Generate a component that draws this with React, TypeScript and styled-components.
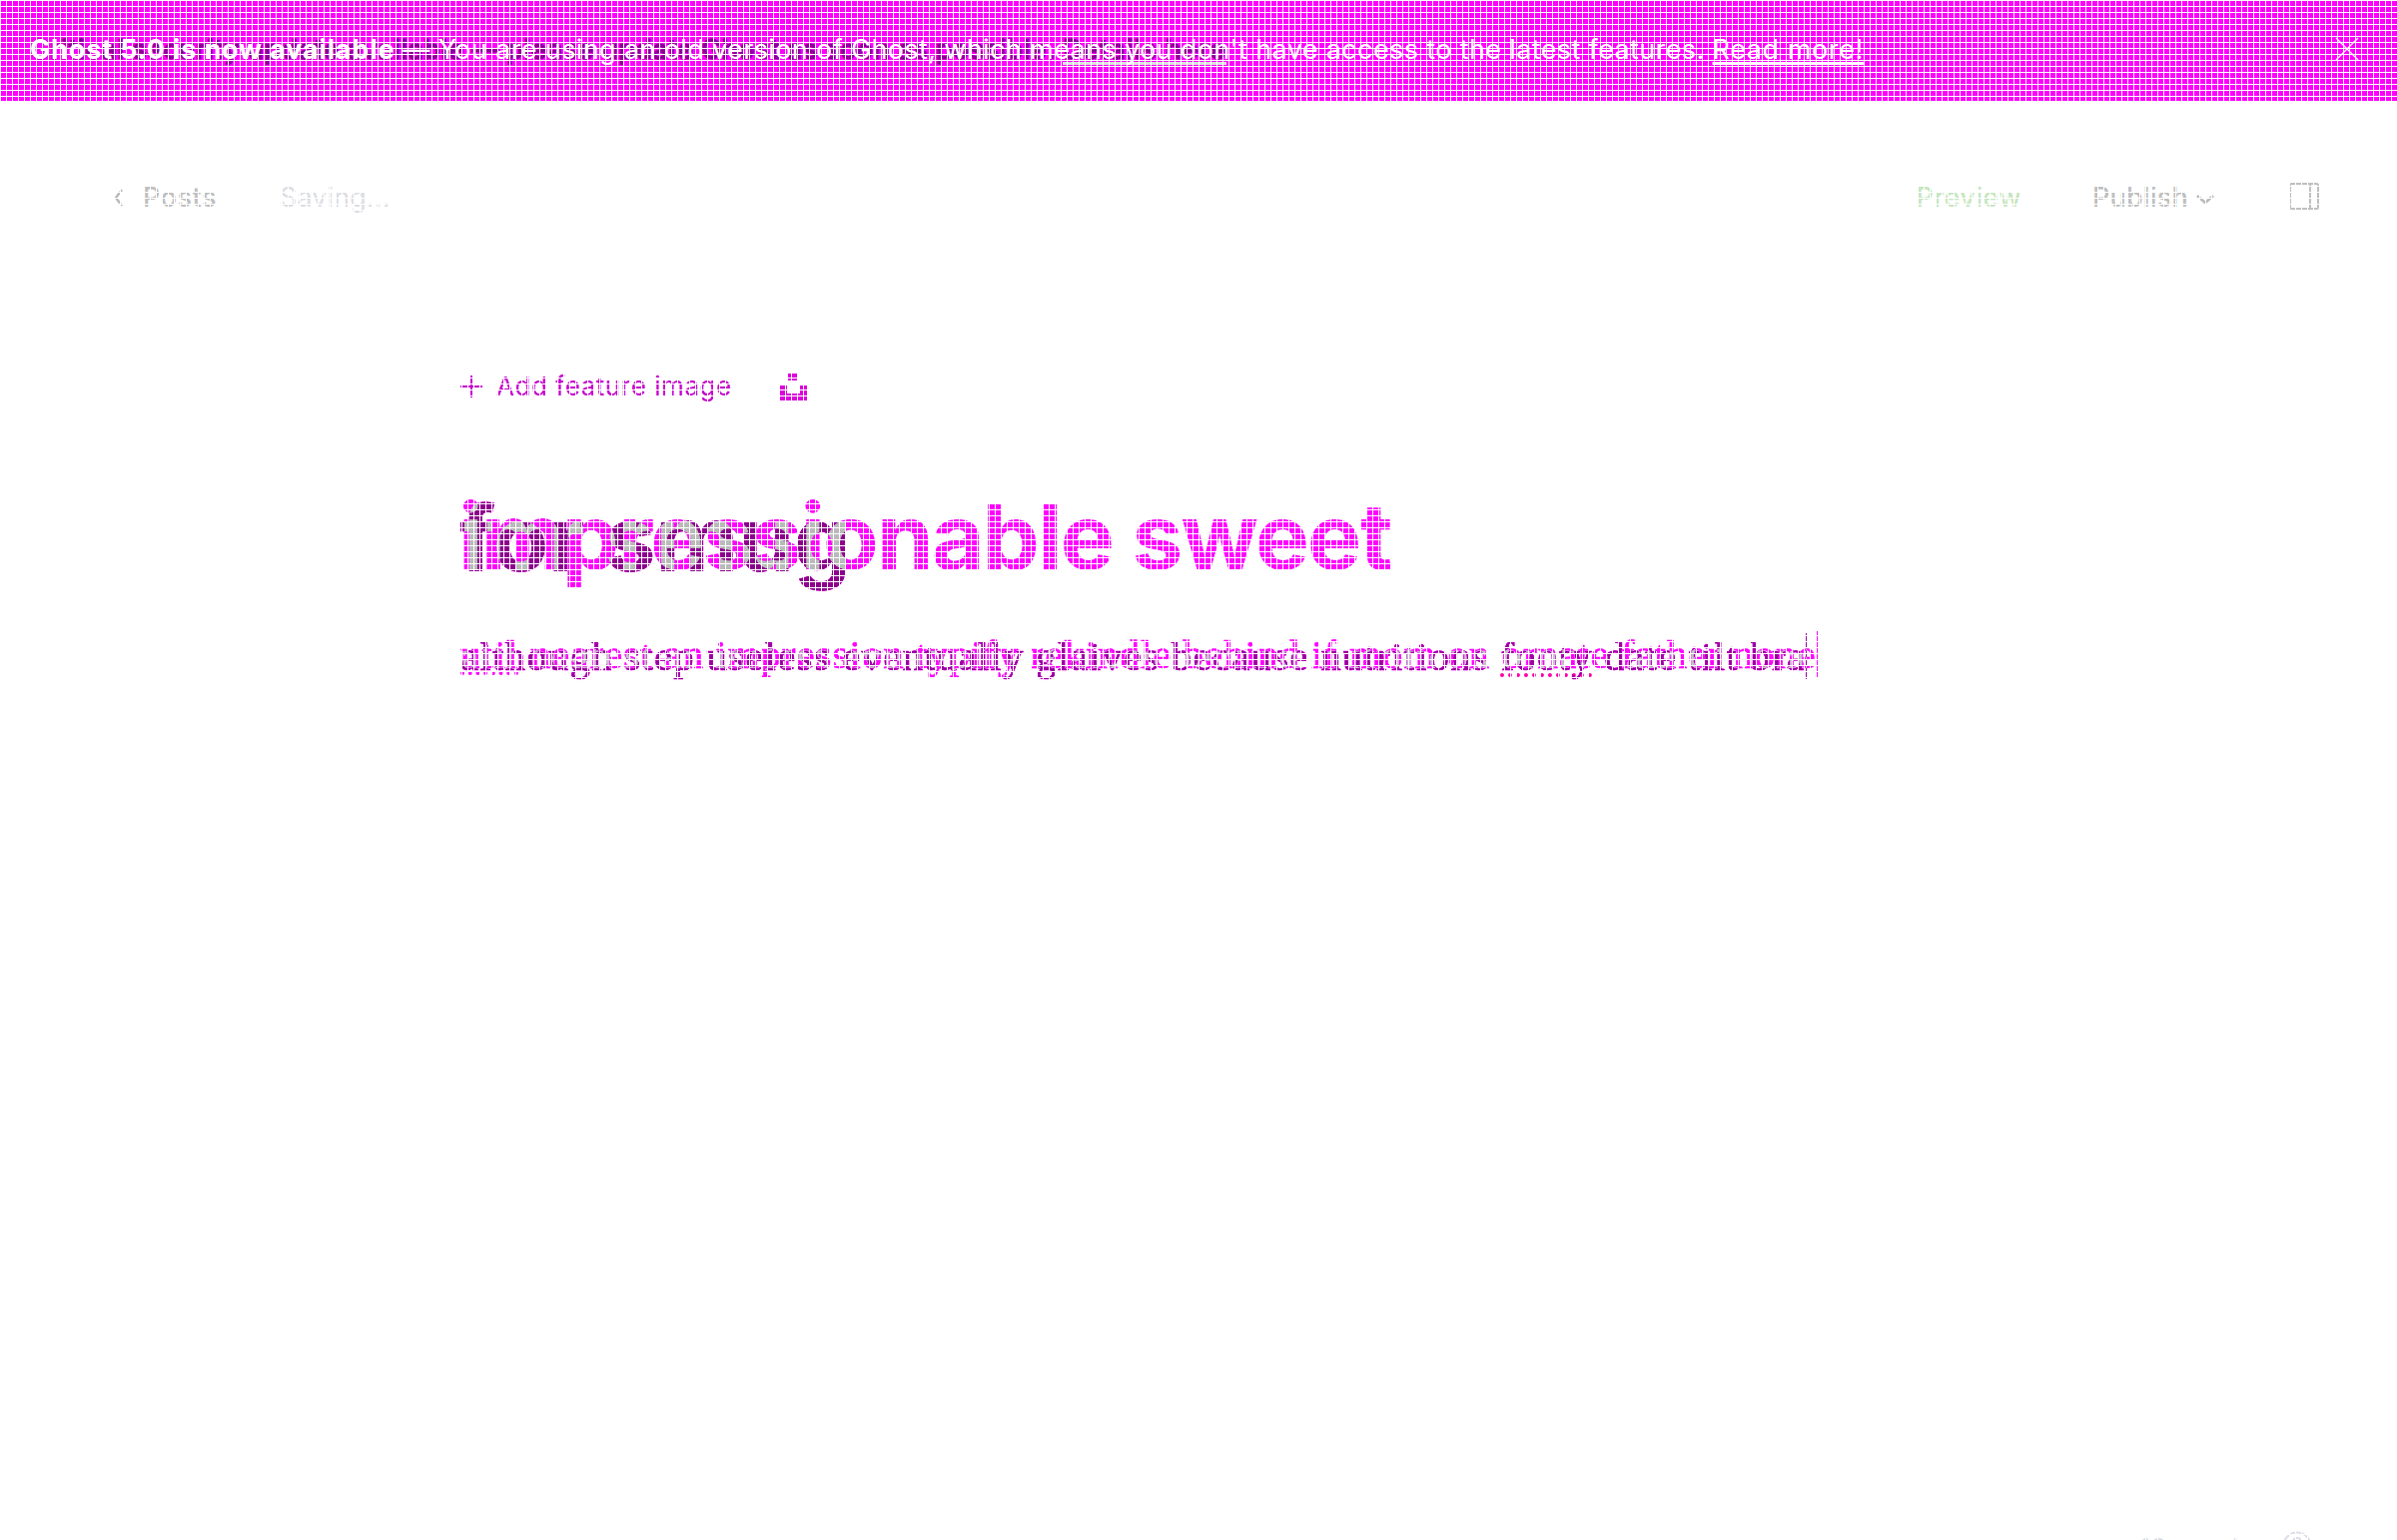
import React from "react";
import styled, { createGlobalStyle } from "styled-components";

const Global = createGlobalStyle`
  * { box-sizing: border-box; }
  body { margin: 0; background: #fff; overflow: hidden; font-family: Inter, "Liberation Sans", sans-serif; }
`;
const Page = styled.div`
  position: relative; width: 2400px; height: 1542px; overflow: hidden;
  display: flex; flex-direction: column; background: #fff;
`;
const GridLines = styled.div`
  position: absolute; inset: 0; pointer-events: none; z-index: 5;
  background-image:
    linear-gradient(to right, #fff 1px, transparent 1px),
    linear-gradient(to bottom, #fff 1px, transparent 1px);
  background-size: 6px 6px;
`;
const Banner = styled.header`
  height: 101px; flex: none; background: #f0f; display: flex; align-items: center;
  justify-content: space-between; padding: 0 37px 2px 30px;
`;
const Stack = styled.div`display: grid; justify-items: start;`;
const BannerText = styled.p<{ $color: string; $spacing: number; $weight: number; $stroke?: number }>`
  grid-area: 1 / 1; margin: 0; white-space: nowrap; font-size: 27px; line-height: 40px;
  font-weight: ${(p) => p.$weight}; color: ${(p) => p.$color}; letter-spacing: ${(p) => p.$spacing}px;
  -webkit-text-stroke: ${(p) => p.$stroke ?? 0}px currentColor;
`;
const Strong = styled.b`font-weight: 700; letter-spacing: 0.85px;`;
const BannerLink = styled.a<{ $line: string; $spacing?: number }>`
  text-decoration: underline; text-decoration-color: ${(p) => p.$line};
  text-decoration-thickness: 3px; text-underline-offset: 3px; text-decoration-skip-ink: none;
  letter-spacing: ${(p) => p.$spacing ?? 0.6}px;
`;
const Bar = styled.nav`
  height: 193px; flex: none; display: flex; align-items: center; justify-content: space-between;
  padding: 0 78px 0 114px;
`;
const Side = styled.div`display: flex; align-items: center;`;
const Label = styled.span<{ $color: string; $left?: number; $spacing?: number; $size?: number; $weight?: number }>`
  font-size: ${(p) => p.$size ?? 27}px; line-height: 36px; font-weight: ${(p) => p.$weight ?? 500};
  white-space: nowrap; color: ${(p) => p.$color}; margin-left: ${(p) => p.$left ?? 0}px;
  letter-spacing: ${(p) => p.$spacing ?? 0.4}px;
`;
const Icon = styled.svg<{ $left?: number; $top?: number }>`
  display: block; flex: none; margin-left: ${(p) => p.$left ?? 0}px; margin-top: ${(p) => p.$top ?? 0}px;
`;
const Editor = styled.main`flex: 1; padding: 70px 0 0 461px;`;
const FeatureRow = styled.div`display: flex; align-items: center; height: 46px; margin-bottom: 72px;`;
const Blended = styled.div<{ $shift?: number }>`
  width: 1500px; isolation: isolate; background: #fff; filter: url(#overlap);
  display: grid; justify-items: start; align-items: start;
  margin: 0 0 31px ${(p) => p.$shift ?? 0}px;
`;
const Title = styled.h1<{ $front?: boolean; $spacing: number }>`
  grid-area: 1 / 1; margin: ${(p) => (p.$front ? "0" : "2px 0 0 1px")}; white-space: nowrap;
  font-size: 91px; line-height: 110px; font-weight: 700;
  letter-spacing: ${(p) => p.$spacing}px;
  color: ${(p) => (p.$front ? "#0f0" : "#8c008c")};
  mix-blend-mode: ${(p) => (p.$front ? "difference" : "normal")};
`;
const Body = styled.p<{ $front?: boolean; $spacing: number }>`
  grid-area: 1 / 1; margin: ${(p) => (p.$front ? 0 : 2)}px 0 0; white-space: nowrap;
  display: flex; align-items: center; height: 60px;
  font-family: "Liberation Serif", serif; font-size: 41px; line-height: 60px;
  letter-spacing: ${(p) => p.$spacing}px;
  -webkit-text-stroke: 0.6px currentColor;
  color: ${(p) => (p.$front ? "#0f0" : "#9a009f")};
  mix-blend-mode: ${(p) => (p.$front ? "difference" : "normal")};
`;
const Misspelt = styled.span<{ $dots: string }>`
  text-decoration: underline dotted ${(p) => p.$dots}; text-decoration-thickness: 4px;
  text-underline-offset: 3px; text-decoration-skip-ink: none;
`;
const Caret = styled.span`width: 1px; height: 46px; background: currentColor;`;
const Footer = styled.footer`
  height: 9px; flex: none; display: flex; align-items: flex-start; padding-left: 2142px;
`;

export default function App() {
  return (
    <Page>
      <Global />
      <svg width="0" height="0" style={{ position: "absolute" }}>
        <filter id="overlap" colorInterpolationFilters="sRGB" x="0" y="0" width="100%" height="100%">
          <feColorMatrix values="1 .18 0 0 0  .6 1 0 0 -.6  0 .18 1 0 0  0 0 0 1 0" />
        </filter>
      </svg>
      <Banner>
        <Stack>
          <BannerText $color="#8c0096" $spacing={0.38} $weight={500} $stroke={1}>
            Critical security update available — please update Ghost as soon as possible. <BannerLink $line="#dbe1de" $spacing={0.9}>Details here</BannerLink>
          </BannerText>
          <BannerText $color="#fff" $spacing={0.37} $weight={400}>
            <Strong>Ghost 5.0 is now available</Strong> — You are using an old version of Ghost, which means you don't have access to the latest features. <BannerLink $line="#fff">Read more!</BannerLink>
          </BannerText>
        </Stack>
        <Icon width="26" height="26" viewBox="0 0 26 26" fill="none" stroke="#fff" strokeWidth="1.3" $top={-2}>
          <path d="M2 2 24 24M24 2 2 24" />
        </Icon>
      </Banner>
      <Bar>
        <Side>
          <Icon width="10" height="18" viewBox="0 0 10 18" fill="none" stroke="#b8b8b8" strokeWidth="2.4">
            <path d="M8 1 2 9 8 17" />
          </Icon>
          <Label $color="#bfbfbf" $left={19} $spacing={0.5}>Posts</Label>
          <Label $color="#dcdde3" $left={63} $spacing={0.1} $weight={400}>Saving...</Label>
        </Side>
        <Side>
          <Label $color="#c6e6be" $spacing={0.4}>Preview</Label>
          <Label $color="#bfbfbf" $left={71} $spacing={0.2}>Publish</Label>
          <Icon $left={8} $top={5} width="18" height="10" viewBox="0 0 18 10" fill="none" stroke="#bbb" strokeWidth="2.8">
            <path d="M1 1 9 8 17 1" />
          </Icon>
          <Icon $left={75} $top={-2} width="30" height="27" viewBox="0 0 30 27" fill="none" stroke="#bfbfbf" strokeWidth="2">
            <rect x="1" y="1" width="28" height="25" rx="1.5" /><path d="M21 1v25" />
          </Icon>
        </Side>
      </Bar>
      <Editor>
        <FeatureRow>
          <Icon width="22" height="22" viewBox="0 0 22 22" stroke="#c500cd" strokeWidth="2">
            <path d="M11 0v22M0 11h22" />
          </Icon>
          <Label $color="#c500cd" $left={14} $size={26} $spacing={0.55} $weight={400}>Add feature image</Label>
          <Icon $left={48} width="27" height="27" viewBox="0 0 27 27" fill="#dd00dd">
            <path d="M8 0h10v7H8zM0 12h7v8h13v-8h7v15H0z" />
          </Icon>
        </FeatureRow>
        <Blended $shift={-2}>
          <Title $spacing={-0.7}>for smug</Title>
          <Title $front $spacing={-1.95}>impressionable sweet</Title>
        </Blended>
        <Blended>
          <Body $spacing={1.17}>
            <span>although step useless eventually glaives because nutritions <Misspelt $dots="#ff009f">footy</Misspelt> date tilt bra</span>
            <Caret />
          </Body>
          <Body $front $spacing={0.94}>
            <span><Misspelt $dots="#0f0">util</Misspelt> nearest an impression typify rekindle behind if mom on ornate father none</span>
            <Caret />
          </Body>
        </Blended>
      </Editor>
      <Footer>
        <Label $color="#dcdde6" $weight={400} $spacing={0}>18 words</Label>
        <Icon $left={29} width="30" height="30" viewBox="0 0 30 30" fill="none" stroke="#dcdde6" strokeWidth="2">
          <circle cx="15" cy="15" r="13.5" /><path d="M11 11q0-4 4-4t4 4q0 2-4 5" />
        </Icon>
      </Footer>
      <GridLines />
    </Page>
  );
}
